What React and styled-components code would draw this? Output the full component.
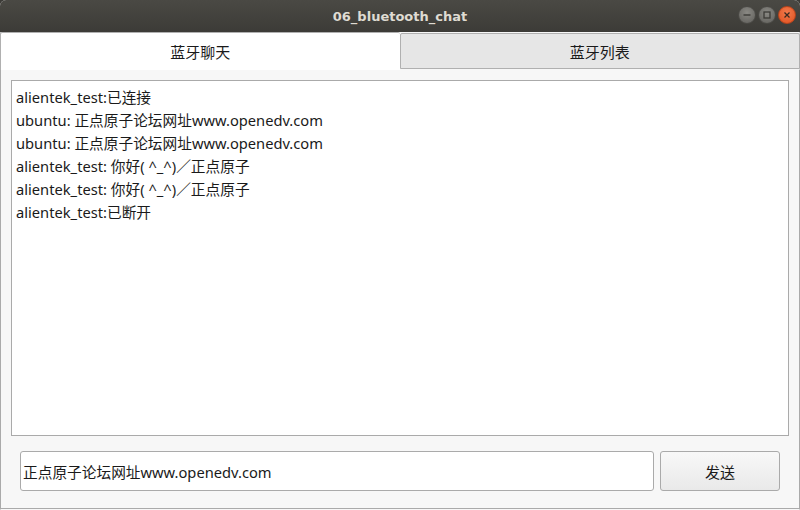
import React from "react";
import styled, { createGlobalStyle } from "styled-components";

const GlobalStyle = createGlobalStyle`
  html, body {
    margin: 0;
    padding: 0;
    background: #3c3b37;
  }
  * {
    box-sizing: border-box;
  }
`;

const messages = [
  "alientek_test:已连接",
  "ubuntu: 正点原子论坛网址www.openedv.com",
  "ubuntu: 正点原子论坛网址www.openedv.com",
  "alientek_test: 你好( ^_^)／正点原子",
  "alientek_test: 你好( ^_^)／正点原子",
  "alientek_test:已断开",
];

function App() {
  return (
    <>
      <GlobalStyle />
      <Window>
        <TitleBar>
          <Title>06_bluetooth_chat</Title>
          <Controls>
            <CtrlButton>
              <svg width="10" height="10" viewBox="0 0 10 10">
                <path d="M1.5 5h7" stroke="#3c3b37" strokeWidth="1.4" />
              </svg>
            </CtrlButton>
            <CtrlButton>
              <svg width="10" height="10" viewBox="0 0 10 10">
                <rect x="2" y="2" width="6" height="6" fill="none" stroke="#3c3b37" strokeWidth="1.3" />
              </svg>
            </CtrlButton>
            <CtrlButton close>
              <svg width="10" height="10" viewBox="0 0 10 10">
                <path d="M2.5 2.5l5 5M7.5 2.5l-5 5" stroke="#3c2a20" strokeWidth="1.3" />
              </svg>
            </CtrlButton>
          </Controls>
        </TitleBar>
        <Body>
          <TabBar>
            <Tab active>蓝牙聊天</Tab>
            <Tab>蓝牙列表</Tab>
          </TabBar>
          <Panel>
            <ChatBox>
              {messages.map((m, i) => (
                <Line key={i}>{m}</Line>
              ))}
            </ChatBox>
            <SendRow>
              <Input defaultValue="正点原子论坛网址www.openedv.com" />
              <SendButton>发送</SendButton>
            </SendRow>
          </Panel>
        </Body>
      </Window>
    </>
  );
}

const Window = styled.div`
  width: 800px;
  height: 510px;
  display: flex;
  flex-direction: column;
  background: #f2f1f0;
  border-radius: 6px 6px 0 0;
  overflow: hidden;
  font-family: "Noto Sans", "Noto Sans CJK SC", sans-serif;
`;

const TitleBar = styled.div`
  height: 32px;
  flex: none;
  display: flex;
  align-items: center;
  justify-content: center;
  position: relative;
  background: linear-gradient(#4a4944, #3c3b37);
`;

const Title = styled.div`
  color: #dfdbd2;
  font-family: "DejaVu Sans", sans-serif;
  font-weight: bold;
  font-size: 13px;
`;

const Controls = styled.div`
  position: absolute;
  right: 4px;
  top: 6px;
  display: flex;
  gap: 2px;
`;

const CtrlButton = styled.div`
  width: 18px;
  height: 18px;
  border-radius: 50%;
  display: flex;
  align-items: center;
  justify-content: center;
  background: ${(p) =>
    p.close
      ? "radial-gradient(circle at 50% 35%, #f27a4c, #e0501f)"
      : "radial-gradient(circle at 50% 35%, #8a8984, #5f5e5a)"};
  border: 1px solid ${(p) => (p.close ? "#b8441c" : "#4a4945")};
`;

const Body = styled.div`
  flex: 1;
  display: flex;
  flex-direction: column;
  background: #f7f7f7;
  border-left: 1px solid #d4d4d4;
  border-right: 1px solid #d4d4d4;
`;

const TabBar = styled.div`
  display: flex;
  height: 38px;
  flex: none;
  margin-left: -1px;
  margin-right: -1px;
`;

const Tab = styled.div`
  flex: 1;
  display: flex;
  align-items: center;
  justify-content: center;
  font-size: 15px;
  color: #1a1a1a;
  background: ${(p) => (p.active ? "#ffffff" : "#e6e6e6")};
  border: 1px solid #b0b0b0;
  border-bottom: ${(p) => (p.active ? "none" : "1px solid #b0b0b0")};
  border-radius: 2px 2px 0 0;
  margin-top: ${(p) => (p.active ? "0" : "1px")};
  margin-bottom: ${(p) => (p.active ? "0" : "1px")};
  height: ${(p) => (p.active ? "38px" : "36px")};
  z-index: ${(p) => (p.active ? 1 : 0)};
  ${(p) => (p.active ? "border-right: none;" : "")}
`;

const Panel = styled.div`
  flex: 1;
  display: flex;
  flex-direction: column;
  background: #f7f7f7;
  border: 1px solid #aaaaaa;
  border-top: none;
  margin: 0 -1px 1px -1px;
  padding: 10px 10px 17px 10px;
`;

const ChatBox = styled.div`
  flex: 1;
  background: #ffffff;
  border: 1px solid #aaaaaa;
  padding: 5px 4px;
  color: #1a1a1a;
`;

const Line = styled.div`
  font-size: 14.7px;
  line-height: 23px;
  white-space: pre;
`;

const SendRow = styled.div`
  display: flex;
  gap: 6px;
  margin-top: 15px;
  padding: 0 9px 0 9px;
  height: 40px;
`;

const Input = styled.input`
  flex: 1;
  height: 40px;
  border: 1px solid #aaaaaa;
  border-radius: 3px;
  background: #ffffff;
  font-family: "Noto Sans", "Noto Sans CJK SC", sans-serif;
  font-size: 14.7px;
  color: #1a1a1a;
  padding: 0 2px;
  outline: none;
`;

const SendButton = styled.button`
  width: 120px;
  height: 40px;
  border: 1px solid #aaaaaa;
  border-radius: 3px;
  background: linear-gradient(#f8f8f8, #e9e9e9);
  font-family: "Noto Sans", "Noto Sans CJK SC", sans-serif;
  font-size: 15px;
  color: #1a1a1a;
`;

export default App;
